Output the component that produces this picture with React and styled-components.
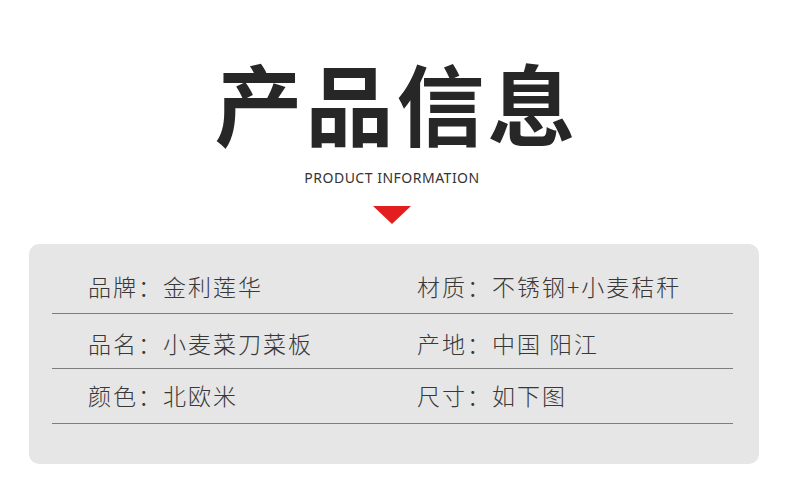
import React from "react";
import styled, { createGlobalStyle } from "styled-components";

const GlobalStyle = createGlobalStyle`
  html, body {
    margin: 0;
    padding: 0;
    background: #ffffff;
  }
  body {
    font-family: "Noto Sans CJK SC", "Noto Sans", sans-serif;
    color: #333333;
  }
`;

const Page = styled.div`
  width: 790px;
  height: 483px;
  display: flex;
  flex-direction: column;
  align-items: center;
  overflow: hidden;
`;

const Title = styled.h1`
  margin: 57px 0 0;
  font-size: 88px;
  line-height: 1;
  font-weight: 700;
  letter-spacing: 3px;
  padding-left: 3px;
  color: #272727;
`;

const Subtitle = styled.div`
  margin-top: 26px;
  font-family: "Noto Sans", sans-serif;
  font-size: 14px;
  line-height: 1;
  letter-spacing: 0.5px;
  color: #333333;
  margin-right: 6px;
`;

const Arrow = styled.div`
  margin-top: 21px;
  margin-right: 6px;
  width: 0;
  height: 0;
  border-left: 19px solid transparent;
  border-right: 19px solid transparent;
  border-top: 18px solid #e21e1e;
`;

const Card = styled.div`
  margin-top: 20px;
  width: 730px;
  height: 220px;
  margin-right: 2px;
  box-sizing: border-box;
  background: #e6e6e6;
  border-radius: 10px;
  padding: 0 26px 0 23px;
`;

const Row = styled.div`
  height: ${(p) => p.$height}px;
  box-sizing: border-box;
  border-bottom: 1px solid #7d7d7d;
  display: grid;
  grid-template-columns: 329px 1fr;
  align-items: end;
  padding-left: 36px;
  padding-bottom: ${(p) => p.$bottom}px;
`;

const Cell = styled.div`
  font-size: 23px;
  line-height: 1;
  font-weight: 300;
  letter-spacing: 2px;
  color: #383838;
  white-space: nowrap;
`;

const rows = [
  { height: 70, bottom: 15, items: ["品牌：金利莲华", "材质：不锈钢+小麦秸秆"] },
  { height: 55, bottom: 13, items: ["品名：小麦菜刀菜板", "产地：中国 阳江"] },
  { height: 55, bottom: 16, items: ["颜色：北欧米", "尺寸：如下图"] },
];

export default function App() {
  return (
    <>
      <GlobalStyle />
      <Page>
        <Title>产品信息</Title>
        <Subtitle>PRODUCT INFORMATION</Subtitle>
        <Arrow />
        <Card>
          {rows.map((row, i) => (
            <Row key={i} $height={row.height} $bottom={row.bottom}>
              {row.items.map((text) => (
                <Cell key={text}>{text}</Cell>
              ))}
            </Row>
          ))}
        </Card>
      </Page>
    </>
  );
}
